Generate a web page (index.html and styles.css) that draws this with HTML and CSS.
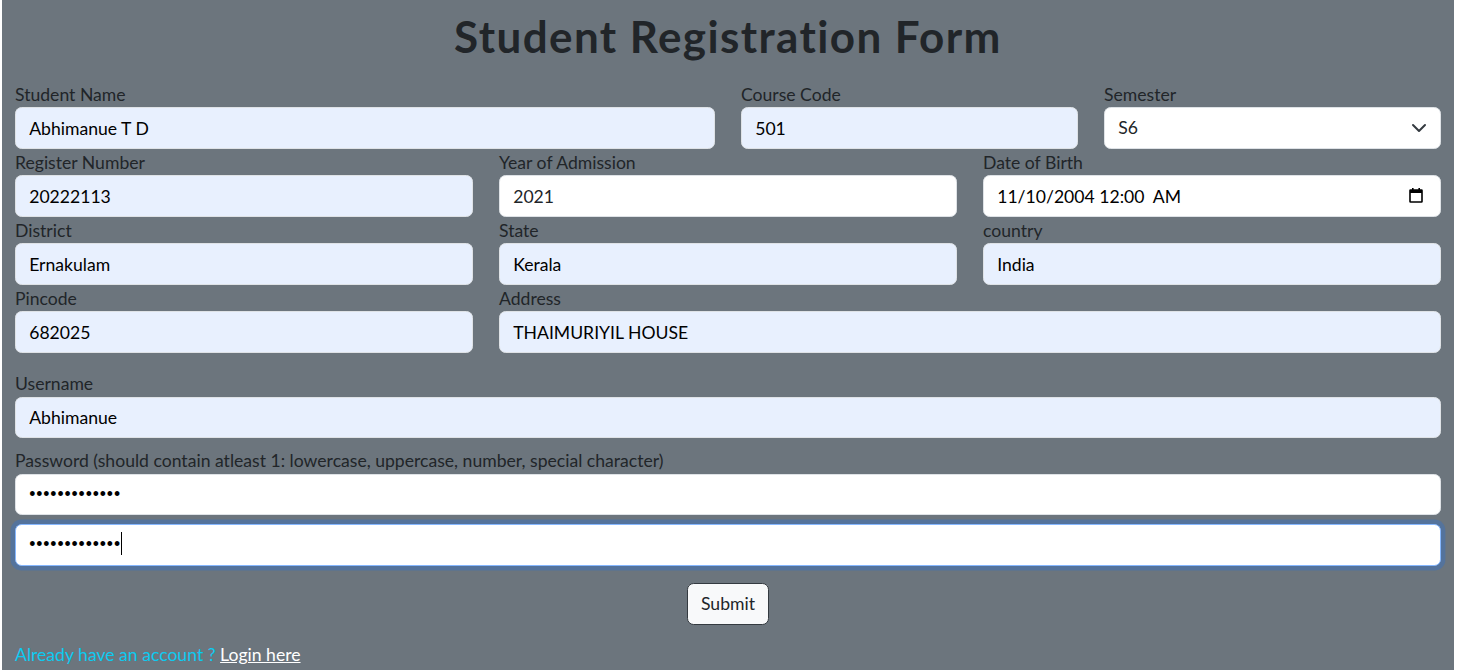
FILE: index.html
```html
<!DOCTYPE html>
<html lang="en">
<head>
<meta charset="utf-8">
<title>Student Registration Form</title>
<link rel="stylesheet" href="styles.css">
</head>
<body>
<div class="page">
  <h1 class="title">Student Registration Form</h1>
  <form class="form">
    <div class="grid">
      <div class="field span-6">
        <label>Student Name</label>
        <input class="control autofill" type="text" value="Abhimanue T D">
      </div>
      <div class="field span-3">
        <label>Course Code</label>
        <input class="control autofill" type="text" value="501">
      </div>
      <div class="field span-3">
        <label>Semester</label>
        <div class="wrap">
          <select class="control select">
            <option>S6</option>
          </select>
          <svg class="chevron" width="16" height="16" viewBox="0 0 16 16"><path d="M2 5l6 6 6-6" fill="none" stroke="#343a40" stroke-width="2" stroke-linecap="round" stroke-linejoin="round"/></svg>
        </div>
      </div>

      <div class="field span-4">
        <label>Register Number</label>
        <input class="control autofill" type="text" value="20222113">
      </div>
      <div class="field span-4">
        <label>Year of Admission</label>
        <input class="control" type="text" value="2021">
      </div>
      <div class="field span-4">
        <label>Date of Birth</label>
        <div class="wrap">
          <input class="control date" type="text" value="11/10/2004 12:00  AM">
          <svg class="calendar" width="14" height="16" viewBox="0 0 14 16"><rect x="1" y="3" width="12" height="12" rx="0.5" fill="none" stroke="#000" stroke-width="1.6"/><rect x="1" y="3" width="12" height="3" fill="#000"/><rect x="3" y="1" width="1.6" height="3" fill="#000"/><rect x="9.4" y="1" width="1.6" height="3" fill="#000"/></svg>
        </div>
      </div>

      <div class="field span-4">
        <label>District</label>
        <input class="control autofill" type="text" value="Ernakulam">
      </div>
      <div class="field span-4">
        <label>State</label>
        <input class="control autofill" type="text" value="Kerala">
      </div>
      <div class="field span-4">
        <label>country</label>
        <input class="control autofill" type="text" value="India">
      </div>

      <div class="field span-4">
        <label>Pincode</label>
        <input class="control autofill" type="text" value="682025">
      </div>
      <div class="field span-8">
        <label>Address</label>
        <input class="control autofill" type="text" value="THAIMURIYIL HOUSE">
      </div>
    </div>

    <div class="field block username">
      <label>Username</label>
      <input class="control autofill" type="text" value="Abhimanue">
    </div>
    <div class="field block">
      <label>Password (should contain atleast 1: lowercase, uppercase, number, special character)</label>
      <input class="control password" type="password" value="Abhi@12345678">
    </div>
    <div class="field block confirm">
      <div class="wrap">
        <input class="control password focused" type="password" value="Abhi@12345678">
        <span class="caret"></span>
      </div>
    </div>

    <div class="actions">
      <button type="button" class="btn">Submit</button>
    </div>
  </form>
  <p class="login">Already have an account ? <a href="#">Login here</a></p>
</div>
</body>
</html>
```
FILE: styles.css
```css
* { box-sizing: border-box; }
html, body { margin: 0; padding: 0; background: #ffffff; height: 100%; }
body {
  font-family: Lato, "Open Sans", "Liberation Sans", sans-serif;
  font-size: 17.6px;
  line-height: 1.5;
  color: #212529;
  overflow: hidden;
}
.page {
  margin: 0 3px 0 2px;
  background: #6c757d;
  min-height: 100%;
  padding: 10px 13px 20px;
}
.title {
  margin: 0 0 18px;
  text-align: center;
  font-size: 44px;
  line-height: 1.2;
  font-weight: 700;
  letter-spacing: 1.4px;
  color: #212529;
}
.grid {
  display: grid;
  grid-template-columns: repeat(12, 1fr);
  column-gap: 26px;
}
.span-3 { grid-column: span 3; }
.span-4 { grid-column: span 4; }
.span-6 { grid-column: span 6; }
.span-8 { grid-column: span 8; }
.field { display: flex; flex-direction: column; }
.field label { line-height: 26.4px; display: block; padding-top: 1px; margin-bottom: -1px; }
.block { margin-bottom: 8.8px; }
.username { margin-top: 17.6px; }
.control {
  display: block;
  width: 100%;
  height: 41.6px;
  padding: 6.6px 13.2px;
  font-family: inherit;
  font-size: 17.6px;
  line-height: 26.4px;
  color: #212529;
  background: #ffffff;
  border: 1px solid #dee2e6;
  border-radius: 6.6px;
  outline: none;
  margin: 0;
}
.autofill { background: #e8f0fe; color: #000; }
.date { color: #000; white-space: pre; }
.password {
  font-family: "Liberation Sans", Arial, sans-serif;
  letter-spacing: 0.9px;
  color: #000;
}
.focused {
  border-color: #86b7fe;
  box-shadow: 0 0 0 4.4px rgba(13, 110, 253, 0.25);
}
.wrap { position: relative; }
.select { appearance: none; -webkit-appearance: none; }
.chevron { position: absolute; right: 14px; top: 13px; pointer-events: none; }
.calendar { position: absolute; right: 18px; top: 12px; pointer-events: none; }
.caret {
  position: absolute;
  left: 106px;
  top: 8px;
  width: 1px;
  height: 23px;
  background: #000;
}
.actions { display: flex; justify-content: center; margin-top: 17.6px; }
.btn {
  font-family: inherit;
  font-size: 17.6px;
  line-height: 26.4px;
  padding: 6.6px 13.2px;
  color: #212529;
  background: #f8f9fa;
  border: 1px solid #343a40;
  border-radius: 6.6px;
}
.login {
  margin: 17.6px 0 0;
  color: #0dcaf0;
}
.login a { color: #ffffff; text-decoration: underline; }
```
